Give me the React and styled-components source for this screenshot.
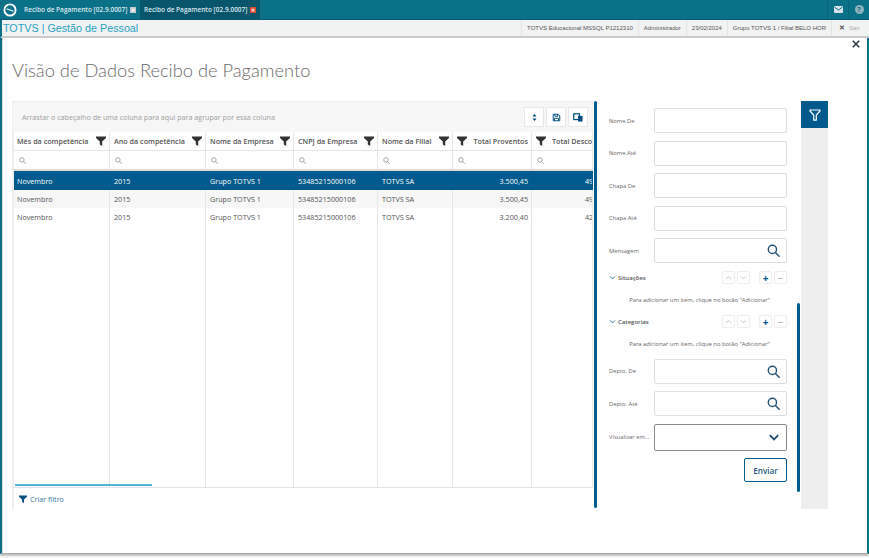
import React from "react";
import styled, { createGlobalStyle } from "styled-components";

const Global = createGlobalStyle`
  html, body { margin: 0; padding: 0; background: #fff; }
  * { box-sizing: border-box; }
  #root { width: 869px; height: 558px; overflow: hidden; }
`;

const columns = [
  { title: "Mês da competência", width: 96, key: "mes" },
  { title: "Ano da competência", width: 96, key: "ano" },
  { title: "Nome da Empresa", width: 88, key: "empresa" },
  { title: "CNPJ da Empresa", width: 84, key: "cnpj" },
  { title: "Nome da Filial", width: 75, key: "filial" },
  { title: "Total Proventos", width: 79, key: "prov", right: true, filterFirst: true },
  { title: "Total Descontos", width: 61, key: "desc", filterFirst: true, clip: true },
];

const rows = [
  { mes: "Novembro", ano: "2015", empresa: "Grupo TOTVS 1", cnpj: "53485215000106", filial: "TOTVS SA", prov: "3.500,45", desc: "499,51" },
  { mes: "Novembro", ano: "2015", empresa: "Grupo TOTVS 1", cnpj: "53485215000106", filial: "TOTVS SA", prov: "3.500,45", desc: "499,51" },
  { mes: "Novembro", ano: "2015", empresa: "Grupo TOTVS 1", cnpj: "53485215000106", filial: "TOTVS SA", prov: "3.200,40", desc: "429,10" },
];

const FunnelSolid = ({ size = 10, color = "#333" }) => (
  <svg width={size} height={size} viewBox="0 0 10 10">
    <path d="M0 0.5h10v1.6L6.2 5.6V10L3.8 8.6V5.6L0 2.1z" fill={color} />
  </svg>
);

const Magnifier = ({ size = 7, color = "#8a8a8a", sw = 1.3 }) => (
  <svg width={size} height={size} viewBox="0 0 12 12" fill="none" stroke={color} strokeWidth={sw}>
    <circle cx="5" cy="5" r="3.8" />
    <path d="M7.8 7.8L11.2 11.2" strokeLinecap="round" />
  </svg>
);

const Chevron = ({ up, size = 7, color = "#bbb", sw = 1.2 }) => (
  <svg width={size} height={size} viewBox="0 0 10 10" fill="none" stroke={color} strokeWidth={sw}>
    <path d={up ? "M1.5 7L5 3.5L8.5 7" : "M1.5 3.5L5 7L8.5 3.5"} />
  </svg>
);

const Field = ({ label, search, select }) => (
  <FieldRow>
    <FieldLabel>{label}</FieldLabel>
    <FieldBox $select={select}>
      {search && <Magnifier size={13} color="#1e4f72" sw={1.3} />}
      {select && <Chevron size={12} color="#1e4f72" sw={1.5} />}
    </FieldBox>
  </FieldRow>
);

const ListSection = ({ title }) => (
  <>
    <SectionHead>
      <Chevron size={7} color="#2a6a92" sw={1.4} />
      <SectionTitle>{title}</SectionTitle>
      <MiniGroup>
        <MiniBtn><Chevron up /></MiniBtn>
        <MiniBtn><Chevron /></MiniBtn>
      </MiniGroup>
      <MiniGroup>
        <MiniBtn $dark>+</MiniBtn>
        <MiniBtn>−</MiniBtn>
      </MiniGroup>
    </SectionHead>
    <EmptyHint>Para adicionar um item, clique no botão "Adicionar"</EmptyHint>
  </>
);

const App = () => {
  return (
    <Page>
      <Global />
      <TopBar>
        <Logo>
          <svg width="14" height="14" viewBox="0 0 14 14" fill="none">
            <circle cx="7" cy="7" r="5.6" stroke="#fff" strokeWidth="1.9" />
            <path d="M3 5.2L11 8.8" stroke="#0b7189" strokeWidth="2.4" />
            <path d="M3.6 5.8L10.4 8.2" stroke="#fff" strokeWidth="1.2" />
          </svg>
        </Logo>
        <Tab>
          Recibo de Pagamento [02.9.0007]
          <TabClose>✕</TabClose>
        </Tab>
        <Tab $active>
          Recibo de Pagamento [02.9.0007]
          <TabClose $active>✕</TabClose>
        </Tab>
        <TopSpacer />
        <TopIcon>
          <svg width="9" height="7" viewBox="0 0 9 7">
            <rect width="9" height="7" rx="1" fill="#d6e4ea" />
            <path d="M0.5 1L4.5 4L8.5 1" stroke="#0b7189" fill="none" />
          </svg>
        </TopIcon>
        <TopIcon>
          <HelpDot>?</HelpDot>
        </TopIcon>
      </TopBar>
      <SubBar>
        <Brand>TOTVS | Gestão de Pessoal</Brand>
        <InfoList>
          <InfoItem>TOTVS Educacional MSSQL P1212310</InfoItem>
          <InfoItem>Administrador</InfoItem>
          <InfoItem>23/02/2024</InfoItem>
          <InfoItem>Grupo TOTVS 1 / Filial BELO HOR</InfoItem>
          <ExitItem><b>✕</b>Sair</ExitItem>
        </InfoList>
      </SubBar>
      <Window>
        <CloseX>
          <svg width="8" height="8" viewBox="0 0 8 8" stroke="#2b3a4a" strokeWidth="1.6">
            <path d="M0.8 0.8L7.2 7.2M7.2 0.8L0.8 7.2" />
          </svg>
        </CloseX>
        <Title>Visão de Dados Recibo de Pagamento</Title>
        <Content>
          <GridArea>
            <GroupBar>
              <GroupHint>Arrastar o cabeçalho de uma coluna para aqui para agrupar por essa coluna</GroupHint>
              <ToolButton>
                <svg width="5" height="9" viewBox="0 0 5 9" fill="#004f7f">
                  <path d="M2.500 1L4.500 3.500H0.500zM2.500 8L0.500 5.500h4z" />
                </svg>
              </ToolButton>
              <ToolButton>
                <svg width="9" height="9" viewBox="0 0 11 11" fill="none" stroke="#004f7f" strokeWidth="1.2">
                  <path d="M1.500 1.500h6l2 2v6h-8z" />
                  <path d="M3.500 1.500v2.500h3.500v-2.500M3 9.500v-3h5v3" />
                </svg>
              </ToolButton>
              <ToolButton>
                <svg width="10" height="9" viewBox="0 0 12 11">
                  <rect x="0.800" y="1" width="7" height="7" fill="none" stroke="#004f7f" strokeWidth="1.500" />
                  <rect x="6" y="3.500" width="5.500" height="7" fill="#004f7f" />
                </svg>
              </ToolButton>
            </GroupBar>
            <Table>
              <Row $head>
                {columns.map((c) => (
                  <HeadCell key={c.key} $w={c.width}>
                    {c.filterFirst && <FunnelSolid />}
                    <HeadText $right={c.right} $after={c.clip}>{c.title}</HeadText>
                    {!c.filterFirst && <FunnelSolid />}
                  </HeadCell>
                ))}
              </Row>
              <Row $filter>
                {columns.map((c) => (
                  <FilterCell key={c.key} $w={c.width}>
                    <Magnifier />
                  </FilterCell>
                ))}
              </Row>
              {rows.map((r, i) => (
                <Row key={i} $selected={i === 0} $alt={i === 1} $h={i === 0 ? 19 : 18}>
                  {columns.map((c) => (
                    <Cell key={c.key} $w={c.width} $right={c.right} $selected={i === 0} $clip={c.clip}>
                      {r[c.key]}
                    </Cell>
                  ))}
                </Row>
              ))}
              <FillRow>
                {columns.map((c) => (
                  <FillCell key={c.key} $w={c.width} />
                ))}
                <HScroll />
              </FillRow>
            </Table>
            <GridFooter>
              <FunnelSolid size={8} color="#004f7f" />
              <FooterLink>Criar filtro</FooterLink>
            </GridFooter>
          </GridArea>
          <PanelScroll />
          <FormPanel>
            <Field label="Nome De" />
            <Field label="Nome Até" />
            <Field label="Chapa De" />
            <Field label="Chapa Até" />
            <Field label="Mensagem" search />
            <ListSection title="Situações" />
            <ListSection title="Categorias" />
            <Field label="Depto. De" search />
            <Field label="Depto. Até" search />
            <Field label="Visualizar em..." select />
            <SendRow>
              <SendButton>Enviar</SendButton>
            </SendRow>
            <InnerScroll />
          </FormPanel>
          <FilterRail>
            <RailButton>
              <svg width="12" height="12" viewBox="0 0 12 12" fill="none" stroke="#fff" strokeWidth="1.2">
                <path d="M1 1h10v1L7.300 6v5.200H4.700V6L1 2z" strokeLinejoin="round" />
              </svg>
            </RailButton>
          </FilterRail>
        </Content>
      </Window>
    </Page>
  );
};

export default App;

const Page = styled.div`
  width: 869px;
  height: 558px;
  display: flex;
  flex-direction: column;
  background: #fff;
  font-family: "Open Sans", "Liberation Sans", sans-serif;
`;
const TopBar = styled.div`
  height: 20px;
  background: #0b7189;
  border-bottom: 1px solid #075a6e;
  display: flex;
  align-items: stretch;
`;
const Logo = styled.div`
  width: 20px;
  display: flex;
  align-items: center;
  justify-content: center;
`;
const Tab = styled.div`
  width: 120px;
  display: flex;
  align-items: center;
  padding-left: 4px;
  gap: 3px;
  font-size: 6.5px;
  font-weight: 600;
  color: #dbe9ee;
  white-space: nowrap;
  background: ${(p) => (p.$active ? "#07566c" : "transparent")};
`;
const TabClose = styled.span`
  width: 6px;
  height: 6px;
  font-size: 5px;
  line-height: 6px;
  text-align: center;
  font-weight: 700;
  color: #fff;
  background: ${(p) => (p.$active ? "#d9492f" : "#c4ccd0")};
`;
const TopSpacer = styled.div`
  flex: 1;
`;
const TopIcon = styled.div`
  width: 21px;
  display: flex;
  align-items: center;
  justify-content: center;
  border-left: 1px solid #0a6579;
`;
const HelpDot = styled.span`
  width: 9px;
  height: 9px;
  border-radius: 50%;
  background: #8fb2bd;
  color: #0b7189;
  font-size: 7px;
  font-weight: 700;
  line-height: 9px;
  text-align: center;
`;
const SubBar = styled.div`
  height: 18px;
  background: #f1f2f2;
  border-bottom: 2px solid #c9cbcc;
  border-left: 2px solid #0b7189;
  display: flex;
  align-items: center;
  justify-content: space-between;
`;
const Brand = styled.div`
  margin-left: 1px;
  font-family: "Liberation Sans", Arial, sans-serif;
  font-size: 10.75px;
  color: #2aa3c5;
  white-space: nowrap;
`;
const InfoList = styled.div`
  display: flex;
  align-items: stretch;
  height: 16px;
`;
const InfoItem = styled.div`
  display: flex;
  align-items: center;
  padding: 0 5px;
  border-left: 1px solid #e2e3e3;
  font-family: "Liberation Sans", Arial, sans-serif;
  font-size: 6px;
  color: #555;
  white-space: nowrap;
`;
const ExitItem = styled.div`
  display: flex;
  align-items: center;
  gap: 4px;
  width: 38px;
  padding-left: 7px;
  border-left: 1px solid #e2e3e3;
  font-family: "Liberation Sans", Arial, sans-serif;
  font-size: 6px;
  color: #aaa;
  b {
    font-size: 7px;
    color: #555;
  }
`;
const Window = styled.div`
  position: relative;
  height: 516px;
  border-left: 2px solid #0b7189;
  border-right: 2px solid #0b7189;
  border-bottom: 1px solid #aaa;
  box-shadow: 0 2px 2px #bbb, inset 1px 0 0 #ddd;
  padding: 21px 0 0 10px;
  background: #fff;
`;
const CloseX = styled.div`
  position: absolute;
  top: 2px;
  right: 7px;
  line-height: 0;
`;
const Title = styled.h1`
  margin: 0;
  height: 23px;
  font-family: Lato, sans-serif;
  font-weight: 300;
  font-size: 18.3px;
  line-height: 23px;
  color: #6a6a6a;
`;
const Content = styled.div`
  display: flex;
  margin-top: 19px;
  height: 408px;
`;
const GridArea = styled.div`
  width: 581px;
  display: flex;
  flex-direction: column;
  overflow: hidden;
`;
const GroupBar = styled.div`
  height: 31px;
  flex: none;
  background: #f6f6f6;
  border: 1px solid #eee;
  border-bottom: none;
  display: flex;
  align-items: center;
  gap: 2px;
  padding: 0 4px 0 9px;
`;
const GroupHint = styled.div`
  flex: 1;
  font-size: 7.15px;
  color: #a0a0a0;
  white-space: nowrap;
`;
const ToolButton = styled.div`
  width: 20px;
  height: 20px;
  background: #fff;
  border: 1px solid #e8e8e8;
  display: flex;
  align-items: center;
  justify-content: center;
`;
const Table = styled.div`
  flex: 1;
  display: flex;
  flex-direction: column;
  min-height: 0;
  border-left: 2px solid #eee;
  border-bottom: 1px solid #e4e4e4;
`;
const Row = styled.div`
  display: flex;
  flex: none;
  height: ${(p) => (p.$head ? 19 : p.$filter ? 20 : p.$h)}px;
  background: ${(p) => (p.$selected ? "#005a8e" : p.$alt ? "#f7f7f7" : "#fff")};
  border-bottom: ${(p) => (p.$filter ? "2px solid #ddd" : p.$head ? "1px solid #e6e6e6" : "none")};
`;
const HeadCell = styled.div`
  width: ${(p) => p.$w}px;
  flex: none;
  display: flex;
  align-items: center;
  justify-content: space-between;
  gap: 4px;
  padding: 0 3px 0 4px;
  border-right: 1px solid #e6e6e6;
  overflow: hidden;
  &:first-child {
    padding-left: 3px;
  }
  svg {
    flex: none;
  }
`;
const HeadText = styled.span`
  flex: ${(p) => (p.$right ? 1 : "none")};
  text-align: ${(p) => (p.$right ? "right" : "left")};
  margin-left: ${(p) => (p.$after ? 2 : 0)}px;
  font-size: 7.2px;
  font-weight: 600;
  color: #555;
  white-space: nowrap;
`;
const FilterCell = styled.div`
  width: ${(p) => p.$w}px;
  flex: none;
  display: flex;
  align-items: center;
  padding-left: 5px;
  border-right: 1px solid #e6e6e6;
`;
const Cell = styled.div`
  width: ${(p) => p.$w}px;
  flex: none;
  display: flex;
  align-items: center;
  justify-content: ${(p) => (p.$right ? "flex-end" : "flex-start")};
  padding: 0 3px 0 4px;
  border-right: 1px solid ${(p) => (p.$selected ? "#005a8e" : "#e6e6e6")};
  font-size: 7.2px;
  color: ${(p) => (p.$selected ? "#fff" : "#555")};
  white-space: nowrap;
  overflow: hidden;
  &:first-child {
    padding-left: 3px;
  }
  ${(p) => p.$clip && "padding-left: 53px;"}
`;
const FillRow = styled.div`
  position: relative;
  flex: 1;
  display: flex;
  min-height: 0;
`;
const FillCell = styled.div`
  width: ${(p) => p.$w}px;
  flex: none;
  border-right: 1px solid #e6e6e6;
`;
const HScroll = styled.div`
  position: absolute;
  left: 1px;
  bottom: 1px;
  width: 137px;
  height: 2px;
  background: #4cb5d0;
`;
const GridFooter = styled.div`
  height: 21px;
  flex: none;
  display: flex;
  align-items: center;
  gap: 3px;
  padding-left: 5px;
  border-left: 2px solid #eee;
`;
const FooterLink = styled.span`
  font-size: 7.2px;
  color: #3b7aa5;
`;
const PanelScroll = styled.div`
  width: 3px;
  height: 407px;
  margin-left: 1px;
  flex: none;
  background: #005a8e;
  border-radius: 2px;
`;
const FormPanel = styled.div`
  position: relative;
  width: 204px;
  flex: none;
  padding: 7px 14px 0 12px;
  display: flex;
  flex-direction: column;
`;
const FieldRow = styled.div`
  display: flex;
  align-items: center;
  margin-bottom: 7.5px;
`;
const FieldLabel = styled.div`
  width: 45px;
  flex: none;
  font-size: 5.8px;
  color: #666;
  white-space: nowrap;
`;
const FieldBox = styled.div`
  width: 133px;
  height: ${(p) => (p.$select ? 27 : 25)}px;
  border: 1px solid ${(p) => (p.$select ? "#8a8a8a" : "#ddd")};
  border-radius: 2px;
  background: #fff;
  display: flex;
  align-items: center;
  justify-content: flex-end;
  padding-right: 6px;
`;
const SectionHead = styled.div`
  display: flex;
  align-items: center;
  height: 14px;
`;
const SectionTitle = styled.div`
  flex: 1;
  margin-left: 2px;
  font-size: 6px;
  font-weight: 600;
  color: #555;
`;
const MiniGroup = styled.div`
  display: flex;
  gap: 2px;
  margin-left: 9px;
`;
const MiniBtn = styled.div`
  width: 13px;
  height: 13px;
  border: 1px solid #eee;
  border-radius: 2px;
  background: #fff;
  display: flex;
  align-items: center;
  justify-content: center;
  font-size: 10px;
  line-height: 1;
  font-weight: 700;
  color: ${(p) => (p.$dark ? "#005a8e" : "#bbb")};
`;
const EmptyHint = styled.div`
  height: 30px;
  padding: 11px 0 0 3px;
  text-align: center;
  font-size: 5.85px;
  color: #666;
  white-space: nowrap;
`;
const SendRow = styled.div`
  display: flex;
  justify-content: flex-end;
`;
const SendButton = styled.div`
  width: 43px;
  height: 24px;
  border: 1px solid #005a8e;
  border-radius: 2px;
  display: flex;
  align-items: center;
  justify-content: center;
  font-size: 8.2px;
  font-weight: 600;
  color: #235a80;
`;
const InnerScroll = styled.div`
  position: absolute;
  top: 202px;
  right: 1px;
  width: 3px;
  height: 189px;
  background: #005a8e;
  border-radius: 2px;
`;
const FilterRail = styled.div`
  width: 27px;
  flex: none;
  background: #eee;
`;
const RailButton = styled.div`
  height: 27px;
  background: #005a8e;
  display: flex;
  align-items: center;
  justify-content: center;
`;
